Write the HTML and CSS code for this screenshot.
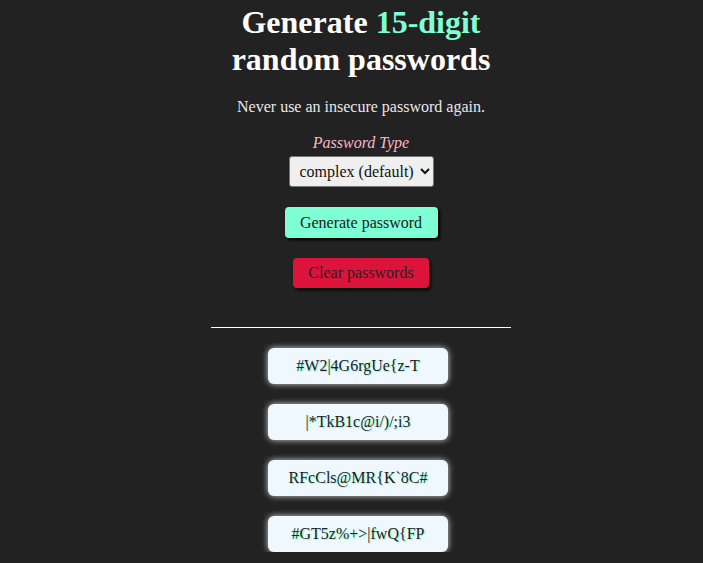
FILE: index.html
```html
<!DOCTYPE html>
<html>
<head>
<meta charset="utf-8">
<link rel="stylesheet" href="styles.css">
</head>
<body>
<main class="app">
  <h1 class="title">Generate <span class="accent">15-digit</span><br>random passwords</h1>
  <p class="subtitle">Never use an insecure password again.</p>
  <label class="type-label" for="type">Password Type</label>
  <select class="type-select" id="type">
    <option>complex (default)</option>
  </select>
  <button class="btn btn-generate">Generate password</button>
  <button class="btn btn-clear">Clear passwords</button>
  <hr class="divider">
  <ul class="list">
    <li class="card">#W2|4G6rgUe{z-T</li>
    <li class="card">|*TkB1c@i/)/;i3</li>
    <li class="card">RFcCls@MR{K`8C#</li>
    <li class="card">#GT5z%+&gt;|fwQ{FP</li>
  </ul>
</main>
</body>
</html>
```
FILE: styles.css
```css
html, body {
  margin: 0;
  padding: 0;
  background: #222222;
  font-family: "Liberation Serif", "Times New Roman", serif;
}
.app {
  display: flex;
  flex-direction: column;
  align-items: center;
  padding: 4px 0 0 19px;
}
.title {
  margin: 0;
  font-size: 32px;
  font-weight: bold;
  color: #ffffff;
  text-align: center;
  line-height: 37px;
}
.accent {
  color: #7fffd4;
}
.subtitle {
  margin: 20px 0 0;
  font-size: 16px;
  color: #e8e8e8;
  line-height: 18px;
}
.type-label {
  margin-top: 18px;
  font-size: 16px;
  font-style: italic;
  color: #ffb6c1;
  line-height: 18px;
}
.type-select {
  margin-top: 4px;
  width: 145px;
  height: 31px;
  font-family: "Liberation Serif", serif;
  font-size: 16px;
  color: #111;
  background: #efefef;
  border: 1px solid #767676;
  border-radius: 3px;
  padding: 0 0 0 6px;
}
.btn {
  font-family: "Liberation Serif", serif;
  font-size: 16px;
  color: #222;
  border: none;
  border-radius: 4px;
  height: 31px;
  padding: 0;
  white-space: nowrap;
  box-shadow: 2px 2px 3px #000;
}
.btn-generate {
  margin-top: 20px;
  background: #7fffd4;
  width: 153px;
}
.btn-clear {
  margin-top: 20px;
  background: #dc143c;
  width: 136px;
  height: 30px;
}
.divider {
  width: 300px;
  margin: 39px 0 0;
  border: none;
  border-top: 1px solid #ffffff;
  height: 0;
}
.list {
  list-style: none;
  margin: 20px 0 0;
  padding: 0 6px 0 0;
  display: flex;
  flex-direction: column;
  gap: 20px;
}
.card {
  width: 180px;
  height: 36px;
  display: flex;
  align-items: center;
  justify-content: center;
  background: #f0f8ff;
  border-radius: 6px;
  box-shadow: 0 0 6px rgba(255, 255, 255, 0.8);
  font-size: 16px;
  color: #222;
  text-shadow: 1px 1px 1px #7fffd4;
}
```
